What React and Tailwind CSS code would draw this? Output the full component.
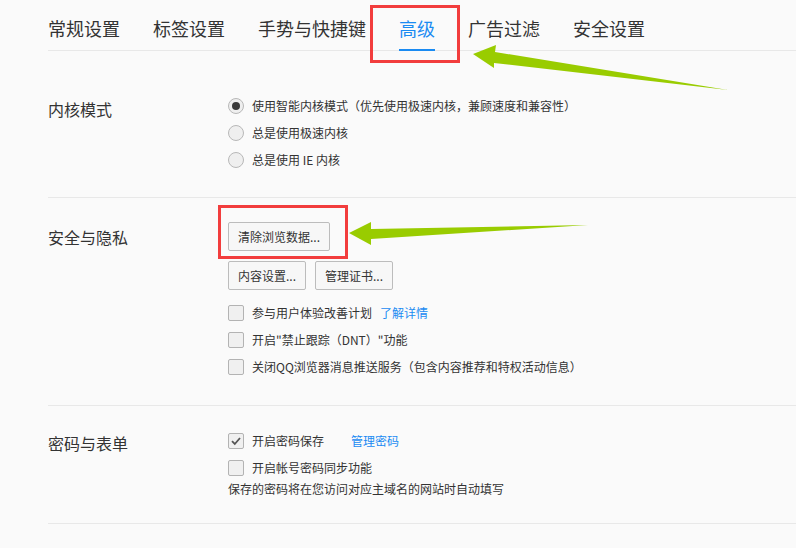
import React from "react";

const font = { fontFamily: '"Noto Sans CJK SC", "Noto Sans", sans-serif' };

function Radio({ checked }) {
  return (
    <span className="w-[16px] h-[16px] rounded-full border border-[#b8b8b8] bg-[#efefef] flex items-center justify-center shrink-0">
      {checked && <span className="w-[8px] h-[8px] rounded-full bg-[#3a3a3a]" />}
    </span>
  );
}

function Check({ checked }) {
  return (
    <span className="w-[16px] h-[16px] rounded-[2px] border border-[#b3b3b3] bg-[#f0f0f0] flex items-center justify-center shrink-0">
      {checked && (
        <svg width="12" height="12" viewBox="0 0 12 12">
          <path d="M2 6.2 L4.8 9 L10 3" fill="none" stroke="#555" strokeWidth="1.8" />
        </svg>
      )}
    </span>
  );
}

function Btn({ children, w }) {
  return (
    <button className={`h-[29px] ${w} border border-[#bcbcbc] rounded-[2px] bg-[#f7f7f7] text-[12px] text-[#333] flex items-center justify-center`}>
      {children}
    </button>
  );
}

export default function App() {
  const tabs = ["常规设置", "标签设置", "手势与快捷键", "高级", "广告过滤", "安全设置"];
  return (
    <div className="relative w-[796px] h-[548px] bg-[#fafafa] overflow-hidden text-[#333]" style={font}>
      <div className="ml-[48px]">
        {/* tabs */}
        <div className="h-[51px] border-b border-[#e8e8e8] flex gap-[33px]">
          {tabs.map((t) => (
            <div
              key={t}
              className={`h-[51px] flex items-center pt-[6px] text-[18px] leading-[24px] border-b-2 ${
                t === "高级" ? "text-[#1a8bf2] border-[#1a8bf2]" : "text-[#333] border-transparent"
              }`}
            >
              {t}
            </div>
          ))}
        </div>

        {/* section 1 */}
        <div className="flex border-b border-[#e8e8e8] pt-[41px] pb-[24px]">
          <div className="w-[180px] text-[16px] leading-[20px] mt-[7px]">内核模式</div>
          <div className="flex flex-col text-[12px]">
            <div className="h-[27px] flex items-center gap-[8px]">
              <Radio checked />
              <span>使用智能内核模式（优先使用极速内核，兼顾速度和兼容性）</span>
            </div>
            <div className="h-[27px] flex items-center gap-[8px]">
              <Radio />
              <span>总是使用极速内核</span>
            </div>
            <div className="h-[27px] flex items-center gap-[8px]">
              <Radio />
              <span>总是使用 IE 内核</span>
            </div>
          </div>
        </div>

        {/* section 2 */}
        <div className="flex border-b border-[#e8e8e8] pt-[24px] pb-[25px]">
          <div className="w-[180px] text-[16px] leading-[20px] mt-[5px]">安全与隐私</div>
          <div className="flex flex-col text-[12px]">
            <div className="flex">
              <Btn w="w-[102px]">清除浏览数据...</Btn>
            </div>
            <div className="flex gap-[9px] mt-[10px]">
              <Btn w="w-[78px]">内容设置...</Btn>
              <Btn w="w-[78px]">管理证书...</Btn>
            </div>
            <div className="h-[27px] flex items-center gap-[8px] mt-[9px]">
              <Check />
              <span>参与用户体验改善计划</span>
              <span className="text-[#1a8bf2]">了解详情</span>
            </div>
            <div className="h-[27px] flex items-center gap-[8px]">
              <Check />
              <span>开启"禁止跟踪（DNT）"功能</span>
            </div>
            <div className="h-[27px] flex items-center gap-[8px]">
              <Check />
              <span>关闭QQ浏览器消息推送服务（包含内容推荐和特权活动信息）</span>
            </div>
          </div>
        </div>

        {/* section 3 */}
        <div className="flex border-b border-[#e8e8e8] pt-[21px] pb-[26px]">
          <div className="w-[180px] text-[16px] leading-[20px] mt-[6px]">密码与表单</div>
          <div className="flex flex-col text-[12px]">
            <div className="h-[27px] flex items-center gap-[8px]">
              <Check checked />
              <span>开启密码保存</span>
              <span className="text-[#1a8bf2] ml-[19px]">管理密码</span>
            </div>
            <div className="h-[27px] flex items-center gap-[8px]">
              <Check />
              <span>开启帐号密码同步功能</span>
            </div>
            <div className="leading-[16px]">保存的密码将在您访问对应主域名的网站时自动填写</div>
          </div>
        </div>
      </div>

      {/* annotations */}
      <div className="absolute left-[370px] top-[5px] w-[90px] h-[58px] border-[3px] border-[#f23d3d] pointer-events-none" />
      <div className="absolute left-[218px] top-[205px] w-[130px] h-[54px] border-[3px] border-[#f23d3d] pointer-events-none" />
      <svg className="absolute left-0 top-0 pointer-events-none" width="796" height="548" viewBox="0 0 796 548">
        <polygon points="473,54 496,45 495,52 728,90 494,63 494,68" fill="#99cc00" />
        <polygon points="349,233 371,222 371,229 588,225 371,239 371,245" fill="#99cc00" />
      </svg>
    </div>
  );
}
